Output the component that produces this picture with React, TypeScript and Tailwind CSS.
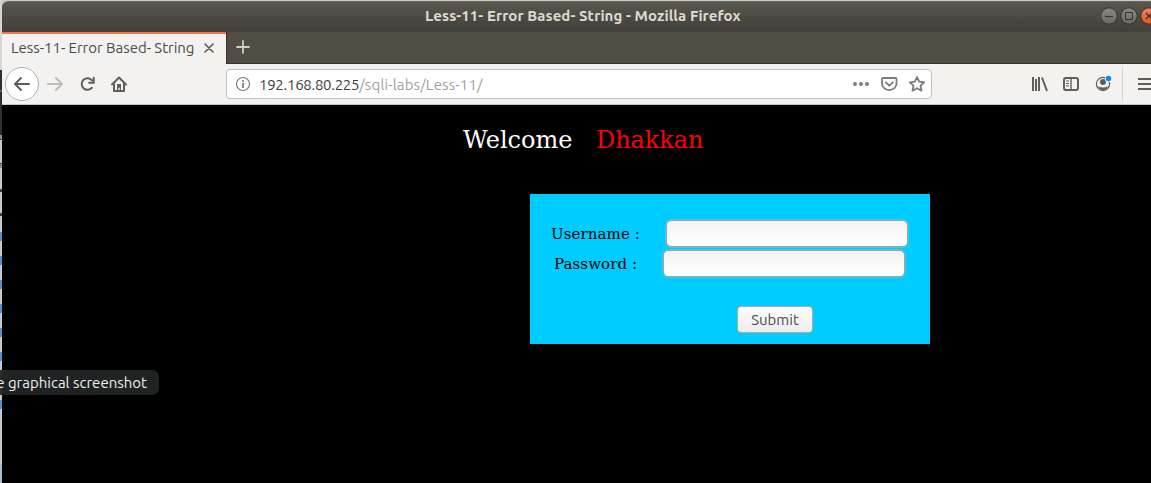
import React from "react";

const ui = "font-['Ubuntu','Noto_Sans',sans-serif] whitespace-pre leading-none";
const serif = "font-['DejaVu_Serif',serif] whitespace-pre leading-none";

const strip: [string, number][] = [
  ["bg-[#d6d5d3]", 70], ["bg-[#2b3236]", 20], ["bg-[#5b6164]", 2], ["bg-[#2b3236]", 43],
  ["bg-[#8b8e8f]", 4], ["bg-[#3d4244]", 1], ["bg-[#c8c8c6]", 23], ["bg-[#3d4244]", 1],
  ["bg-[#8b8e8f]", 4], ["bg-[#c8c8c6]", 21], ["bg-[#3d4244]", 3], ["bg-[#c8c8c6]", 21],
  ["bg-[#3d4244]", 3], ["bg-[#c8c8c6]", 16],
  ...Array.from({ length: 8 }, (): [string, number][] => [["bg-[#5294cf]", 9], ["bg-[#c8c8c6]", 15]]).flat(),
  ["bg-[#c8c8c6]", 40], ["bg-[#a9bccb]", 19],
];

function Desktop() {
  return (
    <div className="flex h-full w-[2px] shrink-0 flex-col">
      {strip.map(([color, height], i) => (
        <div key={i} className={`w-full shrink-0 ${color}`} style={{ height }} />
      ))}
    </div>
  );
}

function TitleBar() {
  return (
    <div className="flex h-[30px] shrink-0 items-center rounded-tl-[6px] border-t border-[#6b695d] bg-linear-to-b from-[#5a574e] to-[#403f39]">
      <h1 className={`${ui} mb-[3px] ml-[423px] w-[676px] text-[15px] font-bold tracking-[0.07px] text-[#dfdbd2]`}>
        Less-11- Error Based- String - Mozilla Firefox
      </h1>
      <svg width="50" height="20" viewBox="0 0 50 20" className="mb-px shrink-0 overflow-hidden" fill="none">
        <defs>
          <linearGradient id="g" x2="0" y2="1"><stop stopColor="#8b8982" /><stop offset="1" stopColor="#696862" /></linearGradient>
          <linearGradient id="o" x2="0" y2="1"><stop stopColor="#f58060" /><stop offset="1" stopColor="#e95420" /></linearGradient>
        </defs>
        <g stroke="#34342f" strokeWidth="1">
          <circle cx="8" cy="10" r="8.2" fill="url(#g)" />
          <circle cx="28" cy="10" r="8.2" fill="url(#g)" />
          <circle cx="48" cy="10" r="8.2" fill="url(#o)" />
          <path d="M4 10.5h8M24.5 6.5h7v7h-7z" />
          <path d="m45 7 6 6m0-6-6 6" strokeWidth="1.4" />
        </g>
      </svg>
    </div>
  );
}

function Tabs() {
  return (
    <div className="flex h-[33px] shrink-0 border-t border-[#46443e] bg-[#504d45]">
      <div className="flex w-[224px] items-center border-t-2 border-[#f07746] bg-[#f4f2f1] pl-[9px]">
        <span className={`${ui} mb-[4px] w-[193px] text-[15px] tracking-[-0.04px] text-[#4a4a4a]`}>Less-11- Error Based- String</span>
        <svg className="mb-[2px]" width="10" height="10" viewBox="0 0 10 10" stroke="#5c5b59" strokeWidth="1.6" strokeLinecap="round"><path d="m1 1 8 8m0-8-8 8" /></svg>
      </div>
      <div className="flex flex-1 items-center border-b border-l border-[#36342f] pl-[9px]">
        <svg className="mb-px" width="14" height="14" viewBox="0 0 14 14" stroke="#d0cdc5" strokeWidth="1.8" strokeLinecap="round"><path d="M7 1v12M1 7h12" /></svg>
      </div>
    </div>
  );
}

function Toolbar() {
  return (
    <div className="flex h-[41px] shrink-0 items-center border-b border-[#c9c6c2] bg-[#f4f2f1]">
      <svg width="130" height="40" viewBox="0 0 130 40" fill="none" stroke="#5f5e5c" strokeWidth="2" strokeLinecap="round" strokeLinejoin="round" className="shrink-0">
        <circle cx="20" cy="20" r="16.5" fill="#fff" stroke="#b5b3b1" strokeWidth="1" />
        <path d="M27 20H13.5M19 14l-6 6 6 6" />
        <path d="M46 20h14M54 14l6 6-6 6" stroke="#bdbbb9" />
        <path d="M90 16.3A5.8 5.8 0 1 0 90 23.7" />
        <path d="M91.7 13.7v5h-4.5" strokeLinejoin="miter" />
        <path d="m110 20.5 7-7 7 7M112 19.5V27h10v-7.5" />
        <path d="M115 27v-7h4v7h-1.3v-3.2h-1.4V27z" fill="#5f5e5c" stroke="none" />
      </svg>
      <div className="ml-[94px] flex h-[30px] w-[706px] shrink-0 items-center rounded-[4px] border border-[#c4c1be] bg-white">
        <svg width="32" height="28" viewBox="0 0 32 28" fill="none" stroke="#7d7c7a" className="shrink-0">
          <circle cx="16" cy="14" r="6.5" strokeWidth="1.2" />
          <path d="M16 13v5M16 10v1.7" strokeWidth="1.8" />
        </svg>
        <p className={`${ui} w-[590px] text-[15px] text-[#3c3b39]`}>
          <span className="tracking-[-0.28px]">192.168.80.225</span>
          <span className="tracking-[0.14px] text-[#a19f9d]">/sqli-labs/Less-11/</span>
        </p>
        <svg width="78" height="28" viewBox="0 0 78 28" fill="none" stroke="#7d7c7a" strokeWidth="1.8" strokeLinejoin="round" strokeLinecap="round" className="shrink-0">
          <g fill="#7d7c7a" stroke="none"><circle cx="6" cy="14" r="2" /><circle cx="12" cy="14" r="2" /><circle cx="18" cy="14" r="2" /></g>
          <path d="M34 8h12.5q1 0 1 1v4.5a7.2 6.5 0 0 1-14.5 0V9q0-1 1-1M36.8 12.4l3.5 3.3 3.5-3.3" />
          <path d="m68 7 2.2 4.6 5 .7-3.7 3.4 1 5-4.5-2.5-4.5 2.5 1-5-3.7-3.4 5-.7z" />
        </svg>
      </div>
      <svg width="219" height="40" viewBox="2 0 219 40" fill="none" stroke="#5f5e5c" strokeWidth="2" strokeLinejoin="round" className="shrink-0">
        <path d="M103 13v14M106 15v12M109 13v14M112 13.5l5 13.5" />
        <rect x="134" y="14" width="14" height="12" rx="2" />
        <path d="M141 14v12" strokeWidth="1.4" />
        <path d="M136 17h3M136 19.5h3M136 22h3" strokeWidth="1" />
        <circle cx="173" cy="20" r="6.6" strokeWidth="1.2" />
        <circle cx="173" cy="18" r="3" fill="#5f5e5c" stroke="none" />
        <path d="M168 22.2q5 2.4 10 0-1 3.8-5 3.8t-5-3.8" fill="#5f5e5c" stroke="none" />
        <circle cx="178.5" cy="14.5" r="3.5" fill="#f4f2f1" stroke="none" />
        <circle cx="178.5" cy="14.5" r="2.7" fill="#0a84ff" stroke="none" />
        <path d="M192.5 3v34" stroke="#d7d5d3" strokeWidth="1" />
        <path d="M208 15h14M208 20h14M208 25h14" />
      </svg>
    </div>
  );
}

const field = "h-[27px] w-[242px] rounded-[5px] border border-[#a49f99] bg-linear-to-b from-[#f3f3f3] to-white outline-none shadow-[0_0_0_1px_rgba(190,200,205,0.35)]";

function Page() {
  return (
    <main className="flex flex-1 flex-col bg-black">
      <h2 className={`${serif} mt-[23px] flex h-[24px] pl-[461px] text-[24px]`}>
        <span className="w-[133px] text-white">Welcome</span>
        <span className="tracking-[-0.08px] text-[#ff0000]">Dhakkan</span>
      </h2>
      <form className="mt-[42px] ml-[528px] flex h-[150px] w-[400px] flex-col bg-[#00ccff] pt-[26px]" onSubmit={(e) => e.preventDefault()}>
        <label className="flex h-[30px] items-start pl-[21px]">
          <span className={`${serif} mt-[7px] w-[115px] text-[15px] tracking-[0.1px] text-black`}>Username :</span>
          <input type="text" className={field} />
        </label>
        <label className="flex h-[30px] items-start pl-[24px]">
          <span className={`${serif} mt-[7px] w-[109px] text-[15px] tracking-[0.1px] text-black`}>Password :</span>
          <input type="password" className={field} />
        </label>
        <button className={`${ui} mt-[26px] ml-[207px] h-[27px] w-[76px] rounded-[4px] border border-[#b0aaa4] bg-linear-to-b from-white to-[#ebebeb] text-[15px] text-[#4c4c4c]`}>
          Submit
        </button>
      </form>
    </main>
  );
}

export default function App() {
  return (
    <div className="relative flex h-[483px] w-[1151px] overflow-hidden bg-[#c9ccce]">
      <Desktop />
      <div className="flex w-[1149px] flex-col overflow-hidden pt-px">
        <TitleBar />
        <Tabs />
        <Toolbar />
        <Page />
      </div>
      <div className={`${ui} absolute top-[370px] left-0 flex h-[25px] w-[159px] items-center justify-end rounded-r-[7px] bg-[#212526]/95 pr-[12px] text-[15px] text-[#eeeeec]`}>
        e graphical screenshot
      </div>
    </div>
  );
}
